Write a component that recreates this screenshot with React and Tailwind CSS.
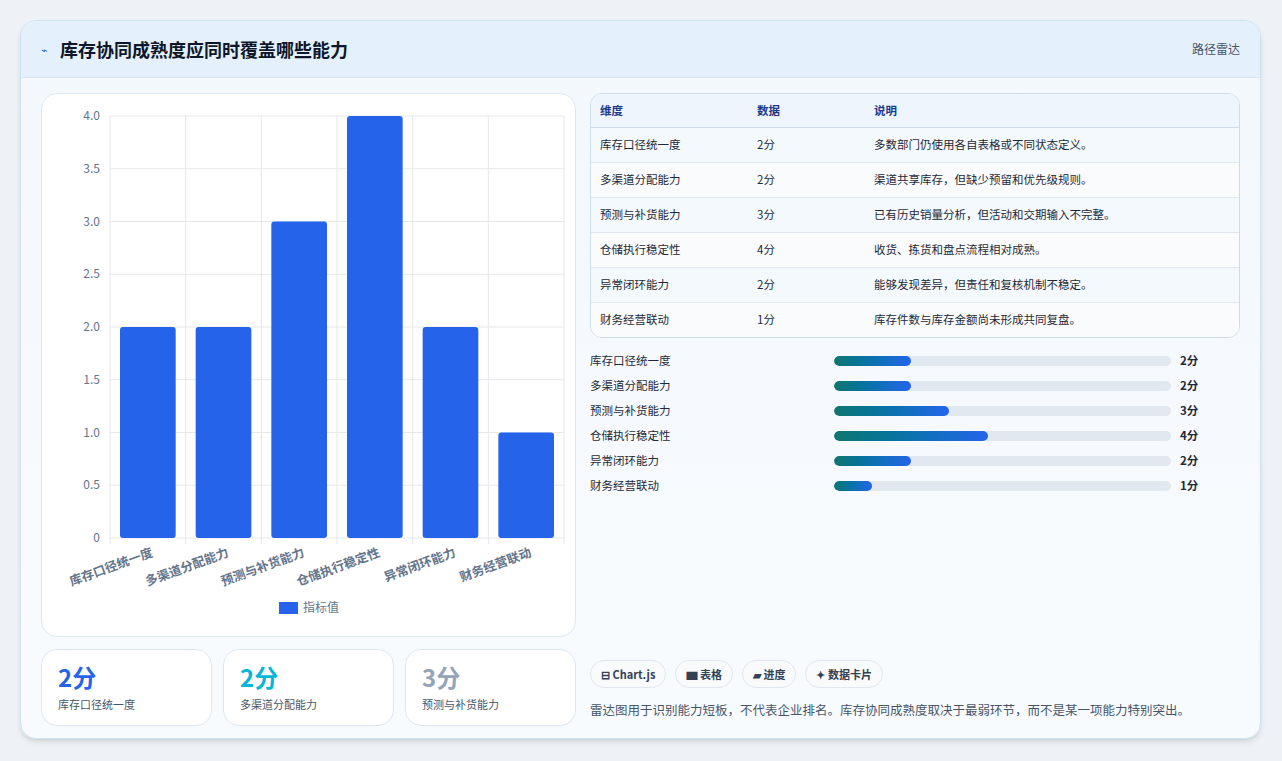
import React from 'react';

const rows = [
    { name: '库存口径统一度', score: 2, note: '多数部门仍使用各自表格或不同状态定义。' },
    { name: '多渠道分配能力', score: 2, note: '渠道共享库存，但缺少预留和优先级规则。' },
    { name: '预测与补货能力', score: 3, note: '已有历史销量分析，但活动和交期输入不完整。' },
    { name: '仓储执行稳定性', score: 4, note: '收货、拣货和盘点流程相对成熟。' },
    { name: '异常闭环能力', score: 2, note: '能够发现差异，但责任和复核机制不稳定。' },
    { name: '财务经营联动', score: 1, note: '库存件数与库存金额尚未形成共同复盘。' },
];

const font = { fontFamily: '"Noto Sans CJK SC", "Noto Sans", sans-serif' };

const BarChart = () => {
    const left = 68, top = 22, w = 454, h = 422;
    const step = w / 6;
    const ticks = [0, 0.5, 1, 1.5, 2, 2.5, 3, 3.5, 4];
    return (
        <svg width="535" height="543" className="block">
            {ticks.map((t) => {
                const y = top + h - (t / 4) * h;
                return (
                    <g key={t}>
                        <line x1={left} x2={left + w} y1={y} y2={y} stroke="#e5e7eb" />
                        <text x={left - 10} y={y + 4} textAnchor="end" fontSize="12" fill="#64748b">{t === 0 ? '0' : t.toFixed(1)}</text>
                    </g>
                );
            })}
            {rows.map((r, i) => (
                <line key={'v' + i} x1={left + step * i} x2={left + step * i} y1={top} y2={top + h + 6} stroke="#e5e7eb" />
            ))}
            <line x1={left + w} x2={left + w} y1={top} y2={top + h + 6} stroke="#e5e7eb" />
            {rows.map((r, i) => {
                const bh = (r.score / 4) * h;
                const x = left + step * i + 10;
                return (
                    <g key={r.name}>
                        <rect x={x} y={top + h - bh} width={step - 20} height={bh} rx="3" fill="#2563eb" />
                        <text transform={`translate(${left + step * i + step / 2 + 6},${top + h + 18}) rotate(-20)`} textAnchor="end" fontSize="12.5" fontWeight="600" fill="#64748b">{r.name}</text>
                    </g>
                );
            })}
            <rect x="237" y="508" width="19" height="12" fill="#2563eb" />
            <text x="261" y="518" fontSize="12" fill="#64748b">指标值</text>
        </svg>
    );
};

const Stat = ({ value, label, color }) => (
    <div className="flex-1 rounded-2xl border border-[#dbe7f3] bg-white px-4 py-3">
        <div className={`text-[24px] font-bold leading-[30px] ${color}`}>{value}</div>
        <div className="mt-1 text-[11px] text-[#475569]">{label}</div>
    </div>
);

const App = () => {
    return (
        <div style={font} className="w-[1282px] h-[761px] bg-[#eef2f6] pt-5 pl-5">
            <div className="w-[1241px] h-[719px] rounded-2xl border border-[#cfe3f1] bg-gradient-to-b from-[#f3f8fd] to-[#f8fbfe] shadow-md overflow-hidden flex flex-col">
                <div className="h-[57px] flex items-center justify-between px-5 bg-[#e4f0fb] border-b border-[#d6e6f4]">
                    <div className="flex items-center gap-3">
                        <span className="text-[#2563eb] text-[11px]">⌁</span>
                        <h1 className="text-[18px] font-bold text-[#0f172a]">库存协同成熟度应同时覆盖哪些能力</h1>
                    </div>
                    <span className="text-[12px] text-[#475569]">路径雷达</span>
                </div>
                <div className="flex gap-[14px] px-5 pt-[15px]">
                    <div className="w-[535px] flex flex-col gap-3">
                        <div className="h-[544px] rounded-2xl border border-[#dbe7f3] bg-white overflow-hidden">
                            <BarChart />
                        </div>
                        <div className="flex gap-[11px]">
                            <Stat value="2分" label="库存口径统一度" color="text-[#2563eb]" />
                            <Stat value="2分" label="多渠道分配能力" color="text-[#06b6d4]" />
                            <Stat value="3分" label="预测与补货能力" color="text-[#94a3b8]" />
                        </div>
                    </div>
                    <div className="w-[654px] flex flex-col">
                        <div className="rounded-xl border border-[#cfdbe8] bg-white overflow-hidden">
                            <table className="w-full text-[11.5px]">
                                <thead>
                                    <tr className="h-[33px] bg-[#eef5fd] text-[#1e3a8a] text-left border-b border-[#cfdbe8]">
                                        <th className="pl-[9px] w-[166px] font-semibold">维度</th>
                                        <th className="w-[117px] font-semibold">数据</th>
                                        <th className="font-semibold">说明</th>
                                    </tr>
                                </thead>
                                <tbody>
                                    {rows.map((r, i) => (
                                        <tr key={r.name} className={`h-[35px] text-[#1f2937] ${i % 2 === 0 ? 'bg-[#f3f9fd]' : 'bg-[#f9fbfd]'} ${i < 5 ? 'border-b border-[#e2e8f0]' : ''}`}>
                                            <td className="pl-[9px]">{r.name}</td>
                                            <td>{r.score}分</td>
                                            <td>{r.note}</td>
                                        </tr>
                                    ))}
                                </tbody>
                            </table>
                        </div>
                        <div className="mt-[10px] flex flex-col">
                            {rows.map((r) => (
                                <div key={r.name} className="h-[25px] flex items-center text-[11.5px] text-[#1f2937]">
                                    <span className="w-[244px]">{r.name}</span>
                                    <div className="w-[337px] h-[10px] rounded-full bg-[#e2e8f0] overflow-hidden">
                                        <div className="h-full rounded-full bg-gradient-to-r from-[#0f766e] to-[#2563eb]" style={{ width: `${r.score * 11.4}%` }} />
                                    </div>
                                    <span className="ml-[9px] font-semibold">{r.score}分</span>
                                </div>
                            ))}
                        </div>
                        <div className="mt-auto mb-[6px] flex flex-col gap-[13px]">
                            <div className="flex gap-[9px] text-[11px] font-semibold text-[#334155]">
                                <span className="h-[28px] px-[10px] flex items-center rounded-full border border-[#e2e8f0] bg-[#f8fafc]">⊟ Chart.js</span>
                                <span className="h-[28px] px-[10px] flex items-center rounded-full border border-[#e2e8f0] bg-[#f8fafc]">▆ 表格</span>
                                <span className="h-[28px] px-[10px] flex items-center rounded-full border border-[#e2e8f0] bg-[#f8fafc]">▰ 进度</span>
                                <span className="h-[28px] px-[10px] flex items-center rounded-full border border-[#e2e8f0] bg-[#f8fafc]">✦ 数据卡片</span>
                            </div>
                            <p className="text-[12.5px] text-[#475569]">雷达图用于识别能力短板，不代表企业排名。库存协同成熟度取决于最弱环节，而不是某一项能力特别突出。</p>
                        </div>
                    </div>
                </div>
            </div>
        </div>
    );
};

export default App;
